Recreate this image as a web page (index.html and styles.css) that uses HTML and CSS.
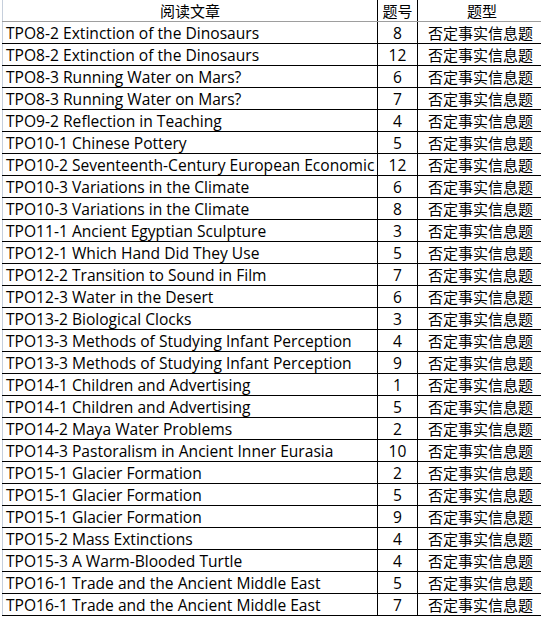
FILE: index.html
```html
<!DOCTYPE html>
<html lang="zh">
<head>
<meta charset="utf-8">
<title>阅读文章 题型</title>
<link rel="stylesheet" href="styles.css">
</head>
<body>
<div class="sheet">
<table class="grid">
<colgroup><col class="c-title"><col class="c-num"><col class="c-type"></colgroup>
<thead>
<tr><th>阅读文章</th><th>题号</th><th>题型</th></tr>
</thead>
<tbody>
<tr><td>TPO8-2 Extinction of the Dinosaurs</td><td class="num">8</td><td class="type">否定事实信息题</td></tr>
<tr><td>TPO8-2 Extinction of the Dinosaurs</td><td class="num">12</td><td class="type">否定事实信息题</td></tr>
<tr><td>TPO8-3 Running Water on Mars?</td><td class="num">6</td><td class="type">否定事实信息题</td></tr>
<tr><td>TPO8-3 Running Water on Mars?</td><td class="num">7</td><td class="type">否定事实信息题</td></tr>
<tr><td>TPO9-2 Reflection in Teaching</td><td class="num">4</td><td class="type">否定事实信息题</td></tr>
<tr><td>TPO10-1 Chinese Pottery</td><td class="num">5</td><td class="type">否定事实信息题</td></tr>
<tr><td>TPO10-2 Seventeenth-Century European Economic</td><td class="num">12</td><td class="type">否定事实信息题</td></tr>
<tr><td>TPO10-3 Variations in the Climate</td><td class="num">6</td><td class="type">否定事实信息题</td></tr>
<tr><td>TPO10-3 Variations in the Climate</td><td class="num">8</td><td class="type">否定事实信息题</td></tr>
<tr><td>TPO11-1 Ancient Egyptian Sculpture</td><td class="num">3</td><td class="type">否定事实信息题</td></tr>
<tr><td>TPO12-1 Which Hand Did They Use</td><td class="num">5</td><td class="type">否定事实信息题</td></tr>
<tr><td>TPO12-2 Transition to Sound in Film</td><td class="num">7</td><td class="type">否定事实信息题</td></tr>
<tr><td>TPO12-3 Water in the Desert</td><td class="num">6</td><td class="type">否定事实信息题</td></tr>
<tr><td>TPO13-2 Biological Clocks</td><td class="num">3</td><td class="type">否定事实信息题</td></tr>
<tr><td>TPO13-3 Methods of Studying Infant Perception</td><td class="num">4</td><td class="type">否定事实信息题</td></tr>
<tr><td>TPO13-3 Methods of Studying Infant Perception</td><td class="num">9</td><td class="type">否定事实信息题</td></tr>
<tr><td>TPO14-1 Children and Advertising</td><td class="num">1</td><td class="type">否定事实信息题</td></tr>
<tr><td>TPO14-1 Children and Advertising</td><td class="num">5</td><td class="type">否定事实信息题</td></tr>
<tr><td>TPO14-2 Maya Water Problems</td><td class="num">2</td><td class="type">否定事实信息题</td></tr>
<tr><td>TPO14-3 Pastoralism in Ancient Inner Eurasia</td><td class="num">10</td><td class="type">否定事实信息题</td></tr>
<tr><td>TPO15-1 Glacier Formation</td><td class="num">2</td><td class="type">否定事实信息题</td></tr>
<tr><td>TPO15-1 Glacier Formation</td><td class="num">5</td><td class="type">否定事实信息题</td></tr>
<tr><td>TPO15-1 Glacier Formation</td><td class="num">9</td><td class="type">否定事实信息题</td></tr>
<tr><td>TPO15-2 Mass Extinctions</td><td class="num">4</td><td class="type">否定事实信息题</td></tr>
<tr><td>TPO15-3 A Warm-Blooded Turtle</td><td class="num">4</td><td class="type">否定事实信息题</td></tr>
<tr><td>TPO16-1 Trade and the Ancient Middle East</td><td class="num">5</td><td class="type">否定事实信息题</td></tr>
<tr><td>TPO16-1 Trade and the Ancient Middle East</td><td class="num">7</td><td class="type">否定事实信息题</td></tr>
</tbody>
</table>
</div>
</body>
</html>
```
FILE: styles.css
```css
html, body {
  margin: 0;
  padding: 0;
  background: #ffffff;
}
.sheet {
  width: 541px;
  height: 617px;
  overflow: hidden;
  padding-left: 2px;
  box-sizing: border-box;
}
.grid {
  border-collapse: collapse;
  table-layout: fixed;
  width: 544px;
  font-family: "Open Sans", "Noto Sans CJK SC", sans-serif;
  font-size: 15px;
  color: #000000;
}
.c-title { width: 375px; }
.c-num { width: 40px; }
.c-type { width: 129px; }
.grid th, .grid td {
  height: 21px;
  padding: 0 3px;
  line-height: 20px;
  white-space: nowrap;
  overflow: hidden;
  border: 1px solid #000000;
}
.grid th {
  font-weight: normal;
  text-align: center;
  border-top: none;
  border-bottom-color: #9e9e9e;
}
.grid th:first-child, .grid td:first-child {
  border-left-color: #c6cfdc;
}
.grid td { text-align: left; }
.grid td:first-child {
  font-size: 15.6px;
  padding-left: 3px;
}
.grid td.num { font-size: 15.6px; }
.grid td.num, .grid td.type { text-align: center; }
.grid td.type { padding-right: 6px; }
```
